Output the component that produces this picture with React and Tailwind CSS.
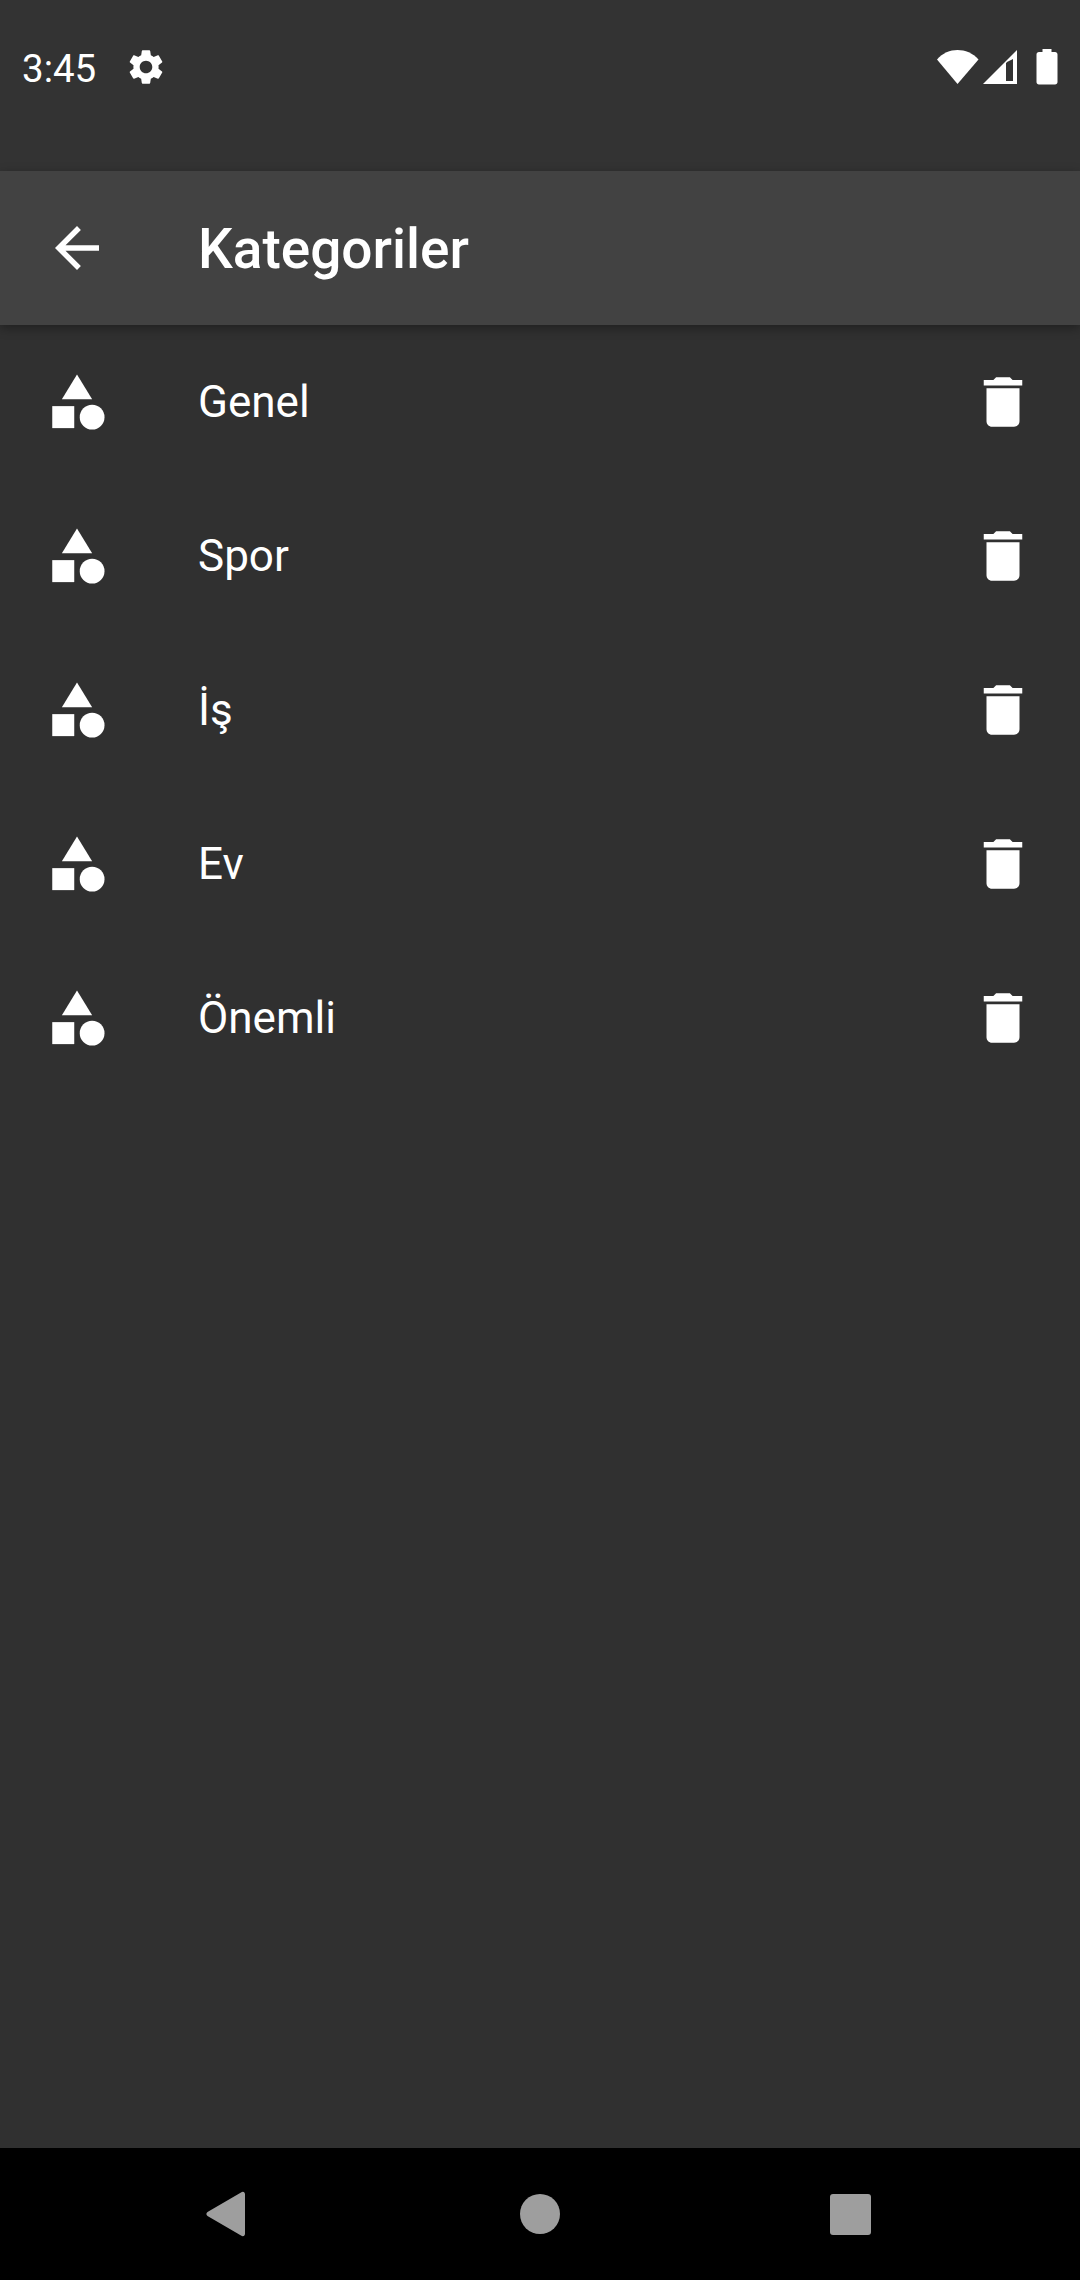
const categories = ['Genel', 'Spor', 'İş', 'Ev', 'Önemli']

function CategoryIcon() {
  return (
    <svg viewBox="0 0 24 24" className="w-[66px] h-[66px] fill-white">
      <path d="M12 2l-5.5 9h11z" />
      <circle cx="17.5" cy="17.5" r="4.5" />
      <path d="M3 13.5h8v8H3z" />
    </svg>
  )
}

function TrashIcon() {
  return (
    <svg viewBox="0 0 24 24" className="w-[66px] h-[66px] fill-white">
      <path d="M6 19c0 1.1.9 2 2 2h8c1.1 0 2-.9 2-2V7H6v12zM19 4h-3.5l-1-1h-5l-1 1H5v2h14V4z" />
    </svg>
  )
}

function StatusBar() {
  return (
    <div className="h-[171px] bg-[#333333] flex items-start justify-between pt-[46px] pl-[22px] pr-[22px] shrink-0">
      <div className="flex items-center h-[42px]">
        <span className="text-[38.5px] leading-[42px] text-white w-[84px] pt-[4px]">3:45</span>
        <svg viewBox="0 0 24 24" className="w-[42px] h-[42px] fill-white ml-[19px]">
          <path d="M19.14 12.94c.04-.3.06-.61.06-.94 0-.32-.02-.64-.07-.94l2.03-1.58c.18-.14.23-.41.12-.61l-1.92-3.32c-.12-.22-.37-.29-.59-.22l-2.39.96c-.5-.38-1.03-.7-1.62-.94l-.36-2.54c-.04-.24-.24-.41-.48-.41h-3.84c-.24 0-.43.17-.47.41l-.36 2.54c-.59.24-1.13.57-1.62.94l-2.39-.96c-.22-.08-.47 0-.59.22L2.74 8.87c-.12.21-.08.47.12.61l2.03 1.58c-.05.3-.09.63-.09.94s.02.64.07.94l-2.03 1.58c-.18.14-.23.41-.12.61l1.92 3.32c.12.22.37.29.59.22l2.39-.96c.5.38 1.03.7 1.62.94l.36 2.54c.05.24.24.41.48.41h3.84c.24 0 .44-.17.47-.41l.36-2.54c.59-.24 1.13-.56 1.62-.94l2.39.96c.22.08.47 0 .59-.22l1.92-3.32c.12-.22.07-.47-.12-.61l-2.01-1.58zM12 15.6c-1.98 0-3.6-1.62-3.6-3.6s1.62-3.6 3.6-3.6 3.6 1.62 3.6 3.6-1.62 3.6-3.6 3.6z" />
        </svg>
      </div>
      <div className="flex items-center h-[42px]">
        {/* wifi */}
        <svg viewBox="0 0 42 36" className="w-[42px] h-[36px] fill-white">
          <path d="M0 10.5C5.5 4 13 1 20.5 1S36 4 41.5 10.5L20.5 35z" />
        </svg>
        {/* signal, with the small cutout */}
        <svg viewBox="0 0 36 36" className="w-[36px] h-[36px] fill-white ml-[2px]">
          <path fillRule="evenodd" d="M2 35L36 1v34zM26 13l-1 1.200V32h7V10z" />
        </svg>
        {/* battery */}
        <svg viewBox="0 0 22 36" className="w-[22px] h-[36px] fill-white ml-[19px]">
          <path d="M6.500 0h9v3H19c1.500 0 2.500 1 2.500 2.500V33c0 1.500-1 2.500-2.500 2.500H3C1.500 35.500.5 34.500.5 33V5.500C.5 4 1.500 3 3 3h3.500z" />
        </svg>
      </div>
    </div>
  )
}

function AppBar() {
  return (
    <div className="h-[154px] bg-[#424242] flex items-center px-[44px] shadow-[0_3px_10px_rgba(0,0,0,0.35)] relative shrink-0">
      <svg viewBox="0 0 24 24" className="w-[66px] h-[66px] fill-white">
        <path d="M20 11H7.83l5.59-5.59L12 4l-8 8 8 8 1.41-1.41L7.83 13H20v-2z" />
      </svg>
      <h1 className="ml-[88px] pt-[2px] text-[55px] leading-none font-medium text-white">Kategoriler</h1>
    </div>
  )
}

function CategoryRow({ name }) {
  return (
    <div className="h-[154px] flex items-center justify-between pl-[44px] pr-[44px]">
      <div className="flex items-center">
        <CategoryIcon />
        <span className="ml-[88px] text-[44px] leading-none text-white">{name}</span>
      </div>
      <TrashIcon />
    </div>
  )
}

function NavBar() {
  return (
    <div className="h-[132px] bg-black flex items-center pl-[206px] shrink-0">
      <svg viewBox="0 0 40 46" className="w-[40px] h-[46px] fill-[#9e9e9e]">
        <path d="M1.500 21L35 1.500C37 0 39 1 39 3.500v39c0 2.500-2 3.500-4 2L1.500 25c-1.500-1-1.500-3 0-4z" />
      </svg>
      <div className="w-[40px] h-[40px] rounded-full bg-[#9e9e9e] ml-[274px]" />
      <div className="w-[41px] h-[41px] rounded-[3px] bg-[#9e9e9e] ml-[270px]" />
    </div>
  )
}

export default function App() {
  return (
    <div className="w-[1080px] h-[2280px] flex flex-col bg-[#303030] overflow-hidden font-['Roboto',sans-serif]">
      <StatusBar />
      <AppBar />
      <main className="flex-1">
        {categories.map((name) => (
          <CategoryRow key={name} name={name} />
        ))}
      </main>
      <NavBar />
    </div>
  )
}
